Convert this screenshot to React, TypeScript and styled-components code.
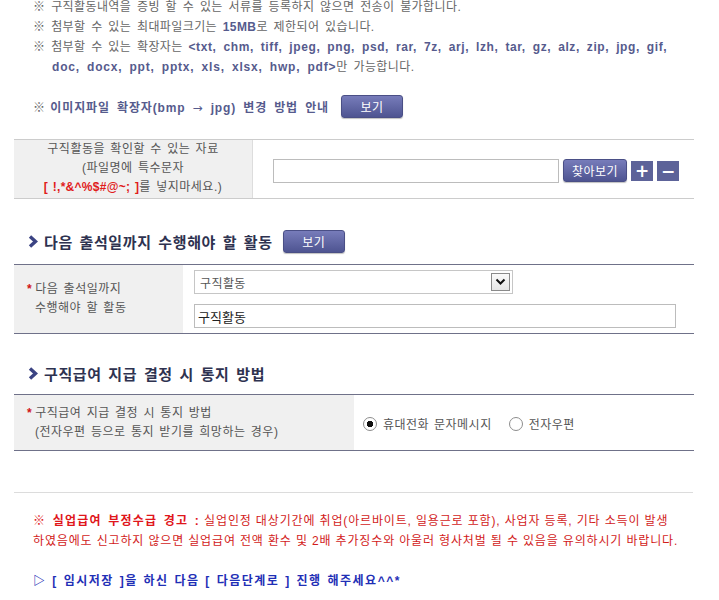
import styled, { createGlobalStyle } from "styled-components";

const GlobalStyle = createGlobalStyle`
  body {
    margin: 0;
    background: #fff;
    font-family: "Liberation Sans", "Noto Sans CJK KR", sans-serif;
    font-size: 12px;
    color: #666;
  }
  * {
    box-sizing: border-box;
  }
`;

const Page = styled.div`
  width: 694px;
  padding: 0 0 20px 14px;
`;

const Notes = styled.div`
  margin-top: -3px;
  padding-left: 19px;
  line-height: 20px;
  letter-spacing: 0.4px;
  word-spacing: 2px;
`;

const NoteLine = styled.div<{ $indent?: boolean }>`
  padding-left: ${(p) => (p.$indent ? "19px" : "0")};
  white-space: nowrap;
`;

const Strong = styled.b<{ $ls?: number; $ws?: number }>`
  color: #565b8d;
  font-weight: 700;
  letter-spacing: ${(p) => p.$ls ?? 0.4}px;
  word-spacing: ${(p) => p.$ws ?? 2}px;
`;

const Arrow = styled.span`
  font-family: "DejaVu Sans", sans-serif;
  font-weight: 400;
`;

const GuideRow = styled.div`
  display: flex;
  align-items: center;
  gap: 12px;
  height: 23px;
  margin-top: 18px;
  padding-left: 19px;
  word-spacing: 2px;
  white-space: nowrap;
`;

const BlueButton = styled.button<{ $w?: number }>`
  width: ${(p) => p.$w ?? 62}px;
  height: 23px;
  padding: 0;
  flex-shrink: 0;
  border: 1px solid #4a4f86;
  border-radius: 3px;
  background: linear-gradient(#777cba, #4e5491);
  color: #fff;
  font: 12px "Noto Sans CJK KR", sans-serif;
  letter-spacing: 0.5px;
  word-spacing: 0;
  box-shadow: 0 1px 1px rgba(0, 0, 0, 0.25);
`;

const SquareButton = styled.button`
  width: 22px;
  height: 20px;
  padding: 0;
  border: none;
  background: #5d6399;
  color: #fff;
  font: bold 17px/20px "DejaVu Sans", sans-serif;
`;

const Table = styled.div<{ $cols: string; $line: string; $mt: number; $rowH?: number }>`
  display: grid;
  grid-template-columns: ${(p) => p.$cols};
  grid-auto-rows: ${(p) => (p.$rowH ? `${p.$rowH}px` : "auto")};
  width: 680px;
  margin-top: ${(p) => p.$mt}px;
  border-top: 1px solid ${(p) => p.$line};
  border-bottom: 1px solid ${(p) => p.$line};
`;

const HeadCell = styled.div<{ $center?: boolean; $divider?: boolean }>`
  display: flex;
  flex-direction: column;
  justify-content: center;
  align-items: ${(p) => (p.$center ? "center" : "flex-start")};
  padding: ${(p) => (p.$center ? "0 0 1px" : "0 0 0 13px")};
  background: #f0f0f0;
  border-right: ${(p) => (p.$divider ? "1px solid #dddddd" : "none")};
  line-height: 19px;
  color: #555;
  letter-spacing: 0.5px;
  word-spacing: 1.5px;
  white-space: nowrap;
`;

const Red = styled.b`
  color: #e01b1b;
  letter-spacing: 0.3px;
  word-spacing: 1px;
`;

const Star = styled.span`
  color: #d0141a;
  font-weight: 700;
  margin-right: 3px;
`;

const Indent = styled.span`
  padding-left: 8px;
`;

const BodyCell = styled.div<{ $column?: boolean; $pad: string }>`
  display: flex;
  flex-direction: ${(p) => (p.$column ? "column" : "row")};
  justify-content: ${(p) => (p.$column ? "center" : "flex-start")};
  align-items: ${(p) => (p.$column ? "flex-start" : "center")};
  gap: ${(p) => (p.$column ? "10px" : "4px")};
  padding: ${(p) => p.$pad};
`;

const TextInput = styled.input<{ $w: number }>`
  width: ${(p) => p.$w}px;
  height: 24px;
  padding: 0 3px;
  border: 1px solid #bcbcbc;
  font: 13px "Noto Sans CJK KR", sans-serif;
  color: #222;
  outline: none;
`;

const SelectBox = styled.div`
  display: flex;
  align-items: center;
  justify-content: space-between;
  width: 319px;
  height: 24px;
  padding: 0 2px 0 5px;
  border: 1px solid #c6c6c6;
  color: #555;
  font-family: "Noto Sans CJK KR", sans-serif;
  letter-spacing: 0.4px;
`;

const ArrowBox = styled.span`
  display: flex;
  align-items: center;
  justify-content: center;
  width: 19px;
  height: 18px;
  border: 1px solid #8a8a8a;
  background: linear-gradient(#fafafa, #e6e6e6);
`;

const SectionTitle = styled.h2<{ $mt: number }>`
  display: flex;
  align-items: center;
  gap: 6px;
  height: 23px;
  margin: ${(p) => p.$mt}px 0 0;
  padding-left: 14px;
  font-size: 15px;
  font-weight: 700;
  color: #2e3250;
  letter-spacing: 0.6px;
  word-spacing: 2px;
  white-space: nowrap;

  button {
    margin-left: 4px;
  }
`;

const RadioLabel = styled.label`
  display: flex;
  align-items: center;
  gap: 6px;
  margin-right: 13px;
  color: #555;
  letter-spacing: 0.5px;
  word-spacing: 1px;
`;

const Radio = styled.input`
  appearance: none;
  width: 14px;
  height: 14px;
  margin: 0;
  border: 1px solid #8d8d8d;
  border-radius: 50%;
  background: #fff;

  &:checked {
    background: radial-gradient(circle, #111 0 3px, #fff 3.5px);
  }
`;

const Divider = styled.hr`
  width: 679px;
  margin: 41px 0 0;
  border: none;
  border-top: 1px solid #dcdcdc;
`;

const Warning = styled.p`
  margin: 18px 0 0;
  padding-left: 19px;
  line-height: 20px;
  color: #d21b1b;
  letter-spacing: 0.85px;
  word-spacing: 0;
  white-space: nowrap;

  b {
    color: #e0161b;
    letter-spacing: 1.2px;
    word-spacing: 2px;
  }
`;

const NextStep = styled.p`
  margin: 20px 0 0;
  padding-left: 19px;
  line-height: 20px;
  font-weight: 700;
  color: #1f2fb6;
  letter-spacing: 1.5px;
  word-spacing: 1px;
  white-space: nowrap;
`;

function Chevron() {
  return (
    <svg width="10" height="13" viewBox="0 0 10 13">
      <polyline
        points="2,1.5 7.5,6.5 2,11.5"
        fill="none"
        stroke="#3b4383"
        strokeWidth="3.4"
      />
    </svg>
  );
}

export default function App() {
  return (
    <Page>
      <GlobalStyle />
      <Notes>
        <NoteLine>※ 구직활동내역을 증빙 할 수 있는 서류를 등록하지 않으면 전송이 불가합니다.</NoteLine>
        <NoteLine>
          ※ 첨부할 수 있는 최대파일크기는 <Strong>15MB</Strong>로 제한되어 있습니다.
        </NoteLine>
        <NoteLine>
          ※ 첨부할 수 있는 확장자는{" "}
          <Strong $ls={0.6} $ws={3}>
            &lt;txt, chm, tiff, jpeg, png, psd, rar, 7z, arj, lzh, tar, gz, alz, zip, jpg, gif,
          </Strong>
        </NoteLine>
        <NoteLine $indent>
          <Strong $ls={0.8} $ws={3}>
            doc, docx, ppt, pptx, xls, xlsx, hwp, pdf&gt;
          </Strong>
          만 가능합니다.
        </NoteLine>
      </Notes>
      <GuideRow>
        <span>
          ※{" "}
          <Strong $ls={0.85} $ws={3}>
            이미지파일 확장자(bmp <Arrow>→</Arrow> jpg) 변경 방법 안내
          </Strong>
        </span>
        <BlueButton>보기</BlueButton>
      </GuideRow>

      <Table $cols="239px 1fr" $line="#cccccc" $mt={21}>
        <HeadCell $center $divider>
          <span>구직활동을 확인할 수 있는 자료</span>
          <span>(파일명에 특수문자</span>
          <span>
            <Red>[ !,*&amp;^%$#@~; ]</Red>를 넣지마세요.)
          </span>
        </HeadCell>
        <BodyCell $pad="3px 0 0 20px">
          <TextInput $w={286} />
          <BlueButton $w={64}>찾아보기</BlueButton>
          <SquareButton>+</SquareButton>
          <SquareButton>−</SquareButton>
        </BodyCell>
      </Table>

      <SectionTitle $mt={31}>
        <Chevron />
        다음 출석일까지 수행해야 할 활동
        <BlueButton>보기</BlueButton>
      </SectionTitle>
      <Table $cols="169px 1fr" $line="#6f7189" $mt={11}>
        <HeadCell>
          <span>
            <Star>*</Star>다음 출석일까지
          </span>
          <Indent>수행해야 할 활동</Indent>
        </HeadCell>
        <BodyCell $column $pad="5px 0 5px 11px">
          <SelectBox>
            구직활동
            <ArrowBox>
              <svg width="11" height="8" viewBox="0 0 11 8">
                <polyline points="1.5,1.5 5.5,5.5 9.5,1.5" fill="none" stroke="#111" strokeWidth="2" />
              </svg>
            </ArrowBox>
          </SelectBox>
          <TextInput $w={482} defaultValue="구직활동" />
        </BodyCell>
      </Table>

      <SectionTitle $mt={28}>
        <Chevron />
        구직급여 지급 결정 시 통지 방법
      </SectionTitle>
      <Table $cols="340px 1fr" $line="#6f7189" $mt={9} $rowH={55}>
        <HeadCell>
          <span>
            <Star>*</Star>구직급여 지급 결정 시 통지 방법
          </span>
          <Indent>(전자우편 등으로 통지 받기를 희망하는 경우)</Indent>
        </HeadCell>
        <BodyCell $pad="2px 0 0 9px">
          <RadioLabel>
            <Radio type="radio" name="notice" defaultChecked />
            휴대전화 문자메시지
          </RadioLabel>
          <RadioLabel>
            <Radio type="radio" name="notice" />
            전자우편
          </RadioLabel>
        </BodyCell>
      </Table>

      <Divider />
      <Warning>
        <b>※ 실업급여 부정수급 경고 :</b> 실업인정 대상기간에 취업(아르바이트, 일용근로 포함), 사업자 등록, 기타 소득이 발생
        <br />
        하였음에도 신고하지 않으면 실업급여 전액 환수 및 2배 추가징수와 아울러 형사처벌 될 수 있음을 유의하시기 바랍니다.
      </Warning>
      <NextStep>▷ [ 임시저장 ]을 하신 다음 [ 다음단계로 ] 진행 해주세요^^*</NextStep>
    </Page>
  );
}
